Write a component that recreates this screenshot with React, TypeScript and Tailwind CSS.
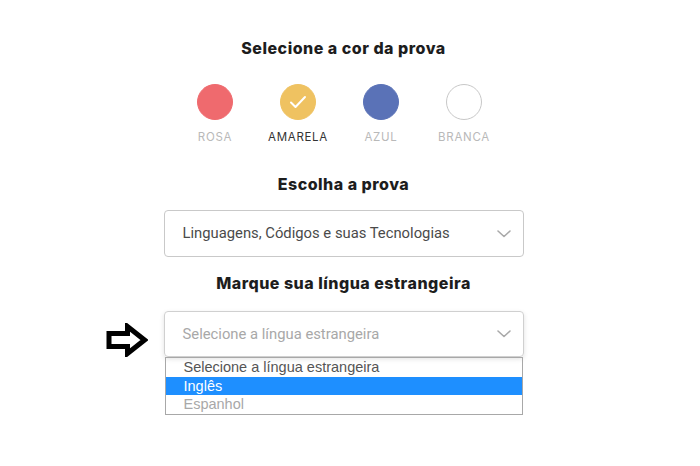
import { useState } from 'react';

const cores = [
  { nome: 'ROSA', bg: 'bg-[#ef6a6e]', border: 'border-[#ef6a6e]' },
  { nome: 'AMARELA', bg: 'bg-[#efc261]', border: 'border-[#efc261]' },
  { nome: 'AZUL', bg: 'bg-[#5a72b7]', border: 'border-[#5a72b7]' },
  { nome: 'BRANCA', bg: 'bg-white', border: 'border-[#c8c8c8]' },
];

function Chevron() {
  return (
    <svg width="14" height="8" viewBox="0 0 14 8" fill="none">
      <path d="M1 1l6 5.5L13 1" stroke="#a9a9a9" strokeWidth="1.6" strokeLinecap="round" strokeLinejoin="round" />
    </svg>
  );
}

function ArrowIcon() {
  return (
    <svg width="42" height="34" viewBox="0 0 42 34" fill="none">
      <path
        d="M3 10.5h18.5V3.5L38.5 17 21.5 30.5v-7H3z"
        stroke="#000"
        strokeWidth="5"
        strokeLinejoin="miter"
      />
    </svg>
  );
}

export default function App() {
  const [cor, setCor] = useState('AMARELA');
  const opcoes = ['Selecione a língua estrangeira', 'Inglês', 'Espanhol'];
  const titulo = 'text-[16px] font-extrabold leading-5 tracking-[0.5px] text-[#1d1d1d]';

  return (
    <div className="w-[700px] h-[466px] bg-white font-['Inter',sans-serif] text-[#222]">
      <div className="flex flex-col items-center pr-[13px] pt-[38px]">
        <h2 className={titulo}>Selecione a cor da prova</h2>

        <div className="flex mt-[26px] ml-[-8px]">
          {cores.map((c) => (
            <button
              key={c.nome}
              onClick={() => setCor(c.nome)}
              className="w-[83px] flex flex-col items-center"
            >
              <span className={`w-[36px] h-[36px] rounded-full border ${c.bg} ${c.border} flex items-center justify-center`}>
                {cor === c.nome && (
                  <svg width="18" height="14" viewBox="0 0 18 14" fill="none">
                    <path d="M2 7.5l4.5 4.5L16 2" stroke="#fff" strokeWidth="2" strokeLinecap="round" strokeLinejoin="round" />
                  </svg>
                )}
              </span>
              <span
                className={`mt-[9px] text-[11.5px] leading-4 tracking-[0.06em] ${cor === c.nome ? 'text-[#333]' : 'text-[#b9b9b9]'}`}
              >
                {c.nome}
              </span>
            </button>
          ))}
        </div>

        <h2 className={`mt-[29px] ${titulo}`}>Escolha a prova</h2>

        <div className="mt-[16px] w-[360px] h-[47px] border border-[#c9c9c9] rounded-[4px] flex items-center justify-between pl-[18px] pr-[12px] font-['Roboto',sans-serif] text-[14.8px] text-[#4a4a4a]">
          <span>Linguagens, Códigos e suas Tecnologias</span>
          <Chevron />
        </div>

        <h2 className={`mt-[16px] ${titulo}`}>Marque sua língua estrangeira</h2>

        <div className="mt-[18px] relative w-[360px]">
          <div className="absolute left-[-58px] top-[12px]">
            <ArrowIcon />
          </div>
          <div className="h-[46px] border border-[#d0d0d0] rounded-[4px] shadow-[0_2px_5px_rgba(0,0,0,0.12)] flex items-center justify-between pl-[18px] pr-[12px] font-['Roboto',sans-serif] text-[14.8px] text-[#a8a8a8]">
            <span>Selecione a língua estrangeira</span>
            <Chevron />
          </div>
          <ul className="mx-[1px] border border-[#a8a8a8] font-['Liberation_Sans',sans-serif] text-[14.5px] leading-[18.7px]">
            {opcoes.map((o) => (
              <li
                key={o}
                className={`pl-[18px] ${o === 'Inglês' ? 'bg-[#1e8fff] text-white' : o === 'Espanhol' ? 'text-[#a8a8a8]' : 'text-[#555]'}`}
              >
                {o}
              </li>
            ))}
          </ul>
        </div>
      </div>
    </div>
  );
}
